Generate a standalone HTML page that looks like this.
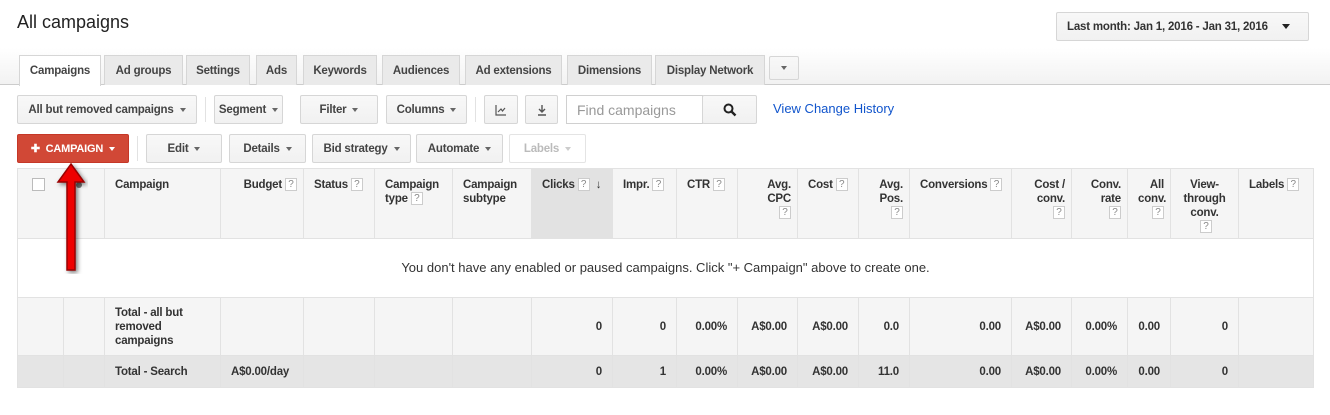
<!DOCTYPE html>
<html><head><style>
*{box-sizing:border-box;margin:0;padding:0}
body{width:1330px;height:415px;background:#fff;font-family:"Liberation Sans",Arial,sans-serif;font-size:12px;color:#222;position:relative;overflow:hidden}
.a{position:absolute}
.btn{position:absolute;background:linear-gradient(#f8f8f8,#f1f1f1);border:1px solid #d6d6d6;border-radius:2px;font-weight:bold;font-size:11.5px;letter-spacing:-0.2px;color:#444;display:flex;align-items:center;justify-content:center;white-space:nowrap}
.car{display:inline-block;width:0;height:0;border-left:3.5px solid transparent;border-right:3.5px solid transparent;border-top:4px solid #666;margin-left:6px;vertical-align:middle}
.tab{position:absolute;top:55px;height:30px;background:#eaeaea;border:1px solid #d6d6d6;border-bottom:none;font-weight:bold;font-size:11.5px;letter-spacing:-0.2px;color:#444;display:flex;align-items:center;justify-content:center}
table{position:absolute;left:17px;top:168px;border-collapse:collapse;table-layout:fixed;width:1296px}
td{border:1px solid #e2e2e2;font-size:11.5px;line-height:14px;letter-spacing:-0.2px;font-weight:bold;color:#333;vertical-align:top;padding:9px 6px 0 10px}
tr.h td{height:70px;background:#f5f5f5}
.q{display:inline-block;border:1px solid #ccc;font-weight:normal;color:#888;font-size:10px;width:12px;height:13px;line-height:11px;text-align:center;background:#fff;margin-left:3px;vertical-align:top;letter-spacing:0}
.r{text-align:right}
.nw{white-space:nowrap}
tr.t td{height:58px;background:#f5f5f5;vertical-align:middle;padding:0 10px}
tr.s td{height:32px;background:#e5e5e5;vertical-align:middle;padding:0 10px}
</style></head><body>
<div class="a" style="left:17px;top:12px;font-size:18px;color:#222">All campaigns</div>
<div class="btn" style="left:1056px;top:12px;width:253px;height:29px;justify-content:flex-start;padding-left:10px;color:#333">Last month: Jan 1, 2016 - Jan 31, 2016<span style="margin-left:14px;border-left:4px solid transparent;border-right:4px solid transparent;border-top:5px solid #222"></span></div>
<div class="a" style="left:0;top:48px;width:1330px;height:37px;background:linear-gradient(#fff,#f2f2f2);border-bottom:1px solid #ccc"></div>
<div class="tab" style="left:19px;width:82px;background:#fff;height:31px">Campaigns</div>
<div class="tab" style="left:104px;width:79px">Ad groups</div>
<div class="tab" style="left:186px;width:64px">Settings</div>
<div class="tab" style="left:256px;width:41px">Ads</div>
<div class="tab" style="left:303px;width:74px">Keywords</div>
<div class="tab" style="left:382px;width:78px">Audiences</div>
<div class="tab" style="left:465px;width:97px">Ad extensions</div>
<div class="tab" style="left:567px;width:85px">Dimensions</div>
<div class="tab" style="left:655px;width:110px">Display Network</div>
<div class="btn" style="left:769px;top:56px;width:30px;height:24px"><span class="car" style="margin:0"></span></div>

<div class="btn" style="left:17px;top:95px;width:180px;height:29px">All but removed campaigns<span class="car"></span></div>
<div class="a" style="left:205px;top:97px;width:1px;height:25px;background:#e2e2e2"></div>
<div class="btn" style="left:214px;top:95px;width:69px;height:29px">Segment<span class="car"></span></div>
<div class="btn" style="left:300px;top:95px;width:78px;height:29px">Filter<span class="car"></span></div>
<div class="btn" style="left:386px;top:95px;width:81px;height:29px">Columns<span class="car"></span></div>
<div class="a" style="left:475px;top:97px;width:1px;height:25px;background:#e2e2e2"></div>
<div class="btn" style="left:484px;top:95px;width:34px;height:29px"><svg width="12" height="12"><path d="M1 1V11H11M3 8L6 5 7.5 7 10 4" fill="none" stroke="#555" stroke-width="1.2"/></svg></div>
<div class="btn" style="left:525px;top:95px;width:33px;height:29px"><svg width="10" height="12"><path d="M5 1V8M2 5L5 8 8 5M1 11H9" fill="none" stroke="#555" stroke-width="1.4"/></svg></div>
<div class="a" style="left:566px;top:95px;width:137px;height:29px;border:1px solid #d0d0d0;font-size:14px;color:#999;padding:6px 0 0 10px">Find campaigns</div>
<div class="btn" style="left:702px;top:95px;width:55px;height:29px"><svg width="14" height="14"><circle cx="5.5" cy="5.5" r="4" fill="none" stroke="#222" stroke-width="2"/><path d="M8.5 8.5L12.5 12.5" stroke="#222" stroke-width="2.4"/></svg></div>
<div class="a" style="left:773px;top:101px;font-size:13px;color:#1155cc">View Change History</div>

<div class="btn" style="left:17px;top:134px;width:112px;height:29px;background:#d14836;border-color:#c53727;color:#fff;font-size:11px">✚&nbsp; CAMPAIGN<span class="car" style="border-top-color:#fff"></span></div>
<div class="a" style="left:137px;top:136px;width:1px;height:25px;background:#e2e2e2"></div>
<div class="btn" style="left:146px;top:134px;width:76px;height:29px">Edit<span class="car"></span></div>
<div class="btn" style="left:229px;top:134px;width:77px;height:29px">Details<span class="car"></span></div>
<div class="btn" style="left:312px;top:134px;width:99px;height:29px">Bid strategy<span class="car"></span></div>
<div class="btn" style="left:416px;top:134px;width:87px;height:29px">Automate<span class="car"></span></div>
<div class="btn" style="left:509px;top:134px;width:77px;height:29px;background:#fff;color:#bbb;border-color:#e4e4e4">Labels<span class="car" style="border-top-color:#ccc"></span></div>

<table>
<colgroup><col style="width:46px"><col style="width:41px"><col style="width:116px"><col style="width:83px"><col style="width:71px"><col style="width:78px"><col style="width:79px"><col style="width:81px"><col style="width:64px"><col style="width:61px"><col style="width:60px"><col style="width:61px"><col style="width:51px"><col style="width:102px"><col style="width:60px"><col style="width:56px"><col style="width:43px"><col style="width:68px"><col style="width:75px"></colgroup>
<tr class="h">
<td style="border-right:none"><span style="display:inline-block;width:13px;height:13px;border:1px solid #bbb;background:#fff;margin-left:4px"></span></td>
<td style="border-left:none;padding-left:12px"><span style="display:inline-block;width:6px;height:6px;border-radius:3px;background:#777;margin-top:4px"></span></td>
<td>Campaign</td>
<td class="r nw">Budget<span class="q">?</span></td>
<td class="nw">Status<span class="q">?</span></td>
<td>Campaign type<span class="q">?</span></td>
<td>Campaign subtype</td>
<td class="nw" style="background:#e2e2e2;padding-left:10px">Clicks<span class="q">?</span> <span style="margin-left:3px">↓</span></td>
<td class="nw">Impr.<span class="q">?</span></td>
<td class="nw">CTR<span class="q">?</span></td>
<td class="r">Avg.<br>CPC<br><span class="q">?</span></td>
<td class="nw">Cost<span class="q">?</span></td>
<td class="r">Avg.<br>Pos.<br><span class="q">?</span></td>
<td class="nw">Conversions<span class="q">?</span></td>
<td class="r">Cost /<br>conv.<br><span class="q">?</span></td>
<td class="r">Conv.<br>rate<br><span class="q">?</span></td>
<td class="r">All<br>conv.<br><span class="q">?</span></td>
<td class="r" style="text-align:center;padding-left:6px">View-<br>through<br>conv.<br><span class="q">?</span></td>
<td class="nw">Labels<span class="q">?</span></td>
</tr>
<tr><td colspan="19" style="height:59px;background:#fff;text-align:center;vertical-align:middle;font-weight:normal;font-size:13px;letter-spacing:0;padding:0">You don't have any enabled or paused campaigns. Click "+ Campaign" above to create one.</td></tr>
<tr class="t"><td></td><td></td><td>Total - all but removed campaigns</td><td></td><td></td><td></td><td></td><td class="r">0</td><td class="r">0</td><td class="r">0.00%</td><td class="r">A$0.00</td><td class="r">A$0.00</td><td class="r">0.0</td><td class="r">0.00</td><td class="r">A$0.00</td><td class="r">0.00%</td><td class="r">0.00</td><td class="r">0</td><td></td></tr>
<tr class="s"><td></td><td></td><td>Total - Search</td><td>A$0.00/day</td><td></td><td></td><td></td><td class="r">0</td><td class="r">1</td><td class="r">0.00%</td><td class="r">A$0.00</td><td class="r">A$0.00</td><td class="r">11.0</td><td class="r">0.00</td><td class="r">A$0.00</td><td class="r">0.00%</td><td class="r">0.00</td><td class="r">0</td><td></td></tr>
</table>

<svg class="a" style="left:54px;top:162px" width="34" height="112"><path d="M17 2L30 20H21V108H13V20H4Z" fill="#e00" stroke="#900" stroke-width="1.5" style="filter:drop-shadow(2px 2px 2px rgba(0,0,0,.5))"/></svg>
</body></html>
